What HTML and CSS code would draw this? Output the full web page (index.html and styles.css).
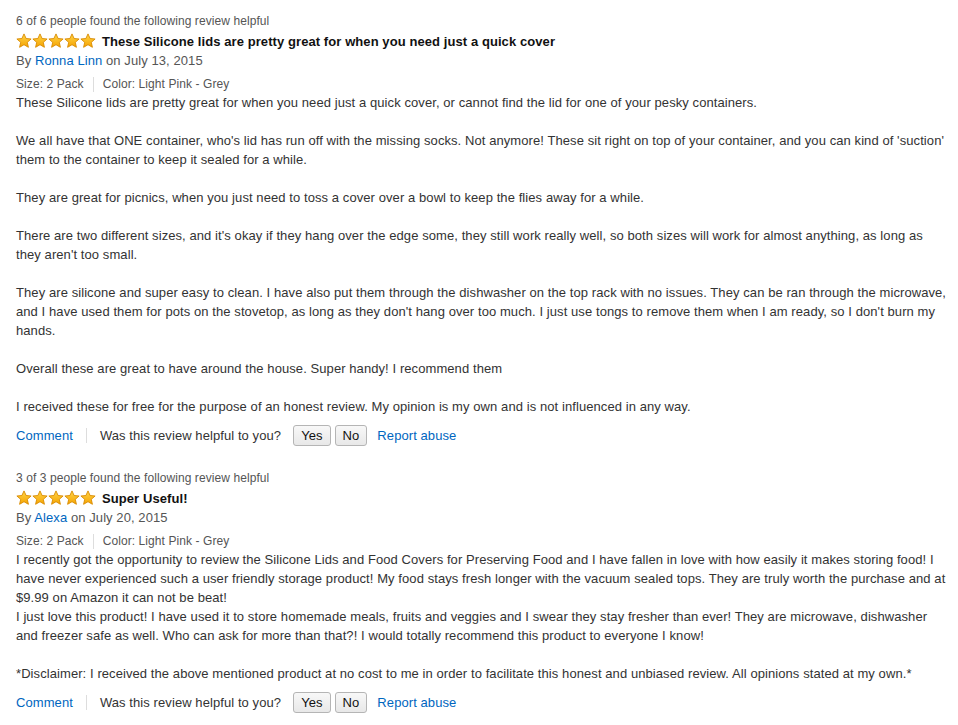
FILE: index.html
```html
<!DOCTYPE html>
<html>
<head>
<meta charset="utf-8">
<link rel="stylesheet" href="styles.css">
</head>
<body>
<svg width="0" height="0" class="defs">
  <defs>
    <linearGradient id="sg" x1="0" y1="0" x2="0" y2="1">
      <stop offset="0" stop-color="#ffd54a"/>
      <stop offset="1" stop-color="#f5a300"/>
    </linearGradient>
    <symbol id="star" viewBox="0 0 16 16">
      <path d="M8 0.9 L10.1 5.5 L15.1 6 L11.3 9.3 L12.4 14.3 L8 11.7 L3.6 14.3 L4.7 9.3 L0.9 6 L5.9 5.5 Z" fill="url(#sg)" stroke="#d88a00" stroke-width="0.9" stroke-linejoin="round"/>
    </symbol>
  </defs>
</svg>
<div class="reviews">
  <div class="review">
    <div class="helpful">6 of 6 people found the following review helpful</div>
    <div class="title-row">
      <span class="stars"><svg><use href="#star"/></svg><svg><use href="#star"/></svg><svg><use href="#star"/></svg><svg><use href="#star"/></svg><svg><use href="#star"/></svg></span>
      <span class="title">These Silicone lids are pretty great for when you need just a quick cover</span>
    </div>
    <div class="byline">By <a class="link">Ronna Linn</a> on July 13, 2015</div>
    <div class="meta"><span>Size: 2 Pack</span><span class="sep"></span><span>Color: Light Pink - Grey</span></div>
    <div class="body">
      <p>These Silicone lids are pretty great for when you need just a quick cover, or cannot find the lid for one of your pesky containers.</p>
      <p>We all have that ONE container, who's lid has run off with the missing socks. Not anymore! These sit right on top of your container, and you can kind of 'suction' them to the container to keep it sealed for a while.</p>
      <p>They are great for picnics, when you just need to toss a cover over a bowl to keep the flies away for a while.</p>
      <p>There are two different sizes, and it's okay if they hang over the edge some, they still work really well, so both sizes will work for almost anything, as long as they aren't too small.</p>
      <p>They are silicone and super easy to clean. I have also put them through the dishwasher on the top rack with no issues. They can be ran through the microwave, and I have used them for pots on the stovetop, as long as they don't hang over too much. I just use tongs to remove them when I am ready, so I don't burn my hands.</p>
      <p>Overall these are great to have around the house. Super handy! I recommend them</p>
      <p>I received these for free for the purpose of an honest review. My opinion is my own and is not influenced in any way.</p>
    </div>
    <div class="actions">
      <a class="link">Comment</a><span class="sep"></span><span class="ask">Was this review helpful to you?</span>
      <button class="btn">Yes</button><button class="btn">No</button>
      <a class="link report">Report abuse</a>
    </div>
  </div>
  <div class="review">
    <div class="helpful">3 of 3 people found the following review helpful</div>
    <div class="title-row">
      <span class="stars"><svg><use href="#star"/></svg><svg><use href="#star"/></svg><svg><use href="#star"/></svg><svg><use href="#star"/></svg><svg><use href="#star"/></svg></span>
      <span class="title">Super Useful!</span>
    </div>
    <div class="byline">By <a class="link">Alexa</a> on July 20, 2015</div>
    <div class="meta"><span>Size: 2 Pack</span><span class="sep"></span><span>Color: Light Pink - Grey</span></div>
    <div class="body">
      <p class="tight">I recently got the opportunity to review the Silicone Lids and Food Covers for Preserving Food and I have fallen in love with how easily it makes storing food! I have never experienced such a user friendly storage product! My food stays fresh longer with the vacuum sealed tops. They are truly worth the purchase and at $9.99 on Amazon it can not be beat!</p>
      <p>I just love this product! I have used it to store homemade meals, fruits and veggies and I swear they stay fresher than ever! They are microwave, dishwasher and freezer safe as well. Who can ask for more than that?! I would totally recommend this product to everyone I know!</p>
      <p>*Disclaimer: I received the above mentioned product at no cost to me in order to facilitate this honest and unbiased review. All opinions stated at my own.*</p>
    </div>
    <div class="actions">
      <a class="link">Comment</a><span class="sep"></span><span class="ask">Was this review helpful to you?</span>
      <button class="btn">Yes</button><button class="btn">No</button>
      <a class="link report">Report abuse</a>
    </div>
  </div>
</div>
</body>
</html>
```
FILE: styles.css
```css
html, body {
  margin: 0;
  padding: 0;
  background: #fff;
}
body {
  font-family: "Liberation Sans", Arial, sans-serif;
  font-size: 13px;
  line-height: 19px;
  letter-spacing: 0.08px;
  color: #333;
}
.defs {
  position: absolute;
  width: 0;
  height: 0;
}
.reviews {
  padding: 12px 10px 0 16px;
  width: 932px;
}
.review {
  margin-bottom: 23px;
}
.helpful {
  font-size: 12px;
  line-height: 19px;
  color: #555;
}
.title-row {
  display: flex;
  align-items: center;
  height: 20px;
}
.stars {
  display: flex;
  margin-right: 6px;
}
.stars svg {
  width: 16px;
  height: 16px;
}
.title {
  font-weight: bold;
  color: #111;
}
.byline {
  line-height: 20px;
  color: #555;
}
.link {
  color: #0066c0;
  text-decoration: none;
}
.meta {
  font-size: 12px;
  color: #555;
  display: flex;
  align-items: center;
  height: 18px;
  padding-top: 4px;
}
.sep {
  display: inline-block;
  width: 1px;
  height: 15px;
  background: #ddd;
  margin: 0 9px;
}
.body p {
  margin: 0 0 19px;
}
.body p.tight {
  margin-bottom: 0;
}
.body p:last-child {
  margin-bottom: 0;
}
.actions {
  display: flex;
  align-items: center;
  height: 22px;
  margin-top: 8px;
}
.actions .sep {
  margin: 0 13px;
}
.ask {
  margin-right: 12px;
}
.btn {
  font-family: "Liberation Sans", Arial, sans-serif;
  font-size: 13px;
  letter-spacing: 0.08px;
  color: #111;
  height: 21px;
  padding: 0 7px;
  margin-right: 4px;
  border: 1px solid #b5b5b5;
  border-radius: 3px;
  background: linear-gradient(#f8f8f8, #e8e8e8);
  line-height: 19px;
}
.report {
  margin-left: 6px;
}
```
